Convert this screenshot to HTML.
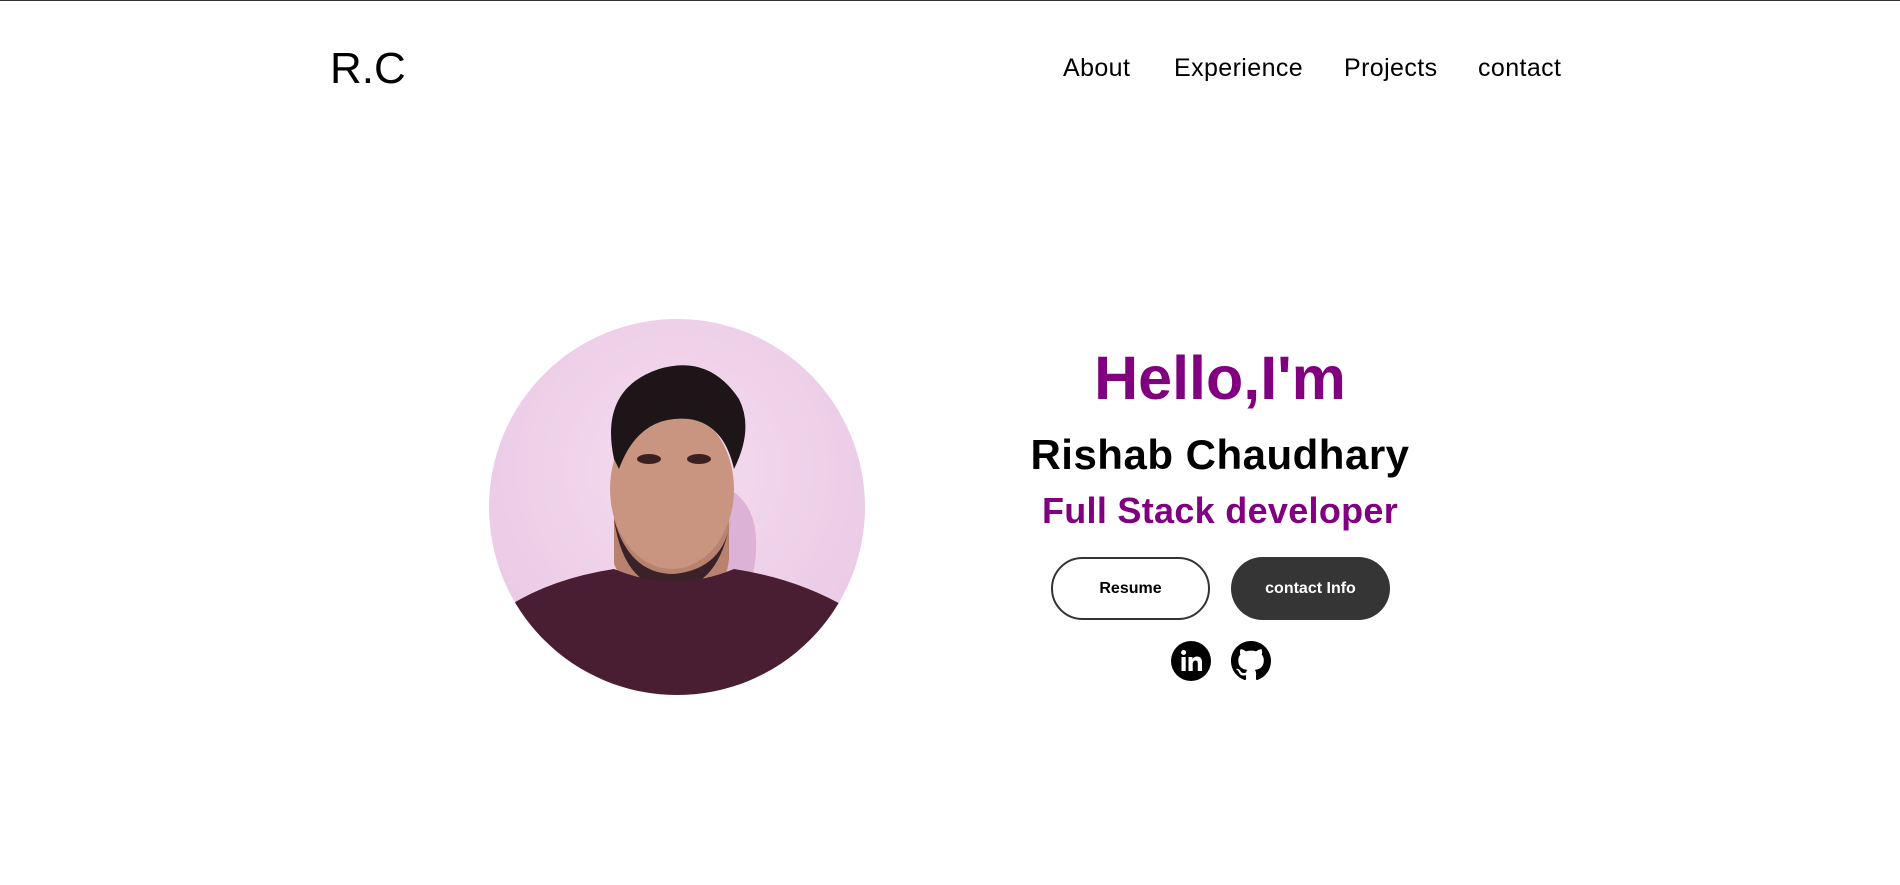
<!DOCTYPE html>
<html><head><meta charset="utf-8"><style>
*{margin:0;padding:0;box-sizing:border-box}
body{width:1900px;height:885px;background:#fff;border-top:1px solid #333;font-family:"Liberation Sans",sans-serif;position:relative;overflow:hidden}
.logo{position:absolute;left:330px;top:43px;font-size:44px;color:#000}
.nav{position:absolute;top:53px;font-size:25px;color:#000;letter-spacing:0.4px}
.t{position:absolute;left:0;width:2440px;text-align:center}
.btn{position:absolute;top:556px;width:159px;height:63px;border-radius:32px;font-weight:bold;font-size:16px;display:flex;align-items:center;justify-content:center}
</style></head><body>
<div class="logo">R.C</div>
<div class="nav" style="left:1063px">About</div>
<div class="nav" style="left:1174px">Experience</div>
<div class="nav" style="left:1344px">Projects</div>
<div class="nav" style="left:1478px">contact</div>

<svg style="position:absolute;left:489px;top:318px" width="376" height="376" viewBox="0 0 376 376">
<defs><clipPath id="c"><circle cx="188" cy="188" r="188"/></clipPath>
<radialGradient id="bg" cx="0.5" cy="0.4" r="0.7"><stop offset="0" stop-color="#f4dcef"/><stop offset="1" stop-color="#e9c6e4"/></radialGradient></defs>
<g clip-path="url(#c)">
<rect width="376" height="376" fill="url(#bg)"/>
<path d="M240 170 Q275 190 265 250 L250 300 L220 260Z" fill="#dcb2d6"/>
<path d="M125 245 Q150 300 190 290 Q235 285 240 240 L240 180 L125 180Z" fill="#b8826f"/>
<ellipse cx="183" cy="170" rx="62" ry="80" fill="#c99580"/>
<path d="M125 140 Q110 70 170 50 Q220 35 250 80 Q265 110 245 150 Q235 105 200 100 Q150 95 130 150Z" fill="#1e1518"/>
<path d="M125 200 Q135 270 185 270 Q230 268 242 200 Q235 250 185 255 Q140 255 125 200Z" fill="#3a2228"/>
<ellipse cx="160" cy="140" rx="12" ry="5" fill="#3a2020"/>
<ellipse cx="210" cy="140" rx="12" ry="5" fill="#3a2020"/>
<path d="M0 376 L15 290 Q60 260 125 250 Q185 275 245 250 Q310 260 360 290 L376 376Z" fill="#4a1e32"/>
</g></svg>

<div class="t" style="top:342px;font-size:61px;font-weight:bold;color:#800080">Hello,I'm</div>
<div class="t" style="top:430px;font-size:42px;font-weight:bold;color:#000;letter-spacing:0.5px">Rishab Chaudhary</div>
<div class="t" style="top:489px;font-size:36px;font-weight:bold;color:#800080;letter-spacing:0.3px">Full Stack developer</div>
<div class="btn" style="left:1051px;border:2px solid #333;color:#000">Resume</div>
<div class="btn" style="left:1231px;background:#353535;color:#fff">contact Info</div>

<svg style="position:absolute;left:1171px;top:640px" width="40" height="40" viewBox="0 0 40 40">
<circle cx="20" cy="20" r="20" fill="#000"/>
<rect x="10.5" y="16" width="4.2" height="14" fill="#fff"/><circle cx="12.6" cy="11.5" r="2.5" fill="#fff"/>
<path d="M17.5 16h4v2q1.5-2.5 4.5-2.5 5 0 5 6V30h-4.2v-7.5q0-3-2.3-3t-2.8 3V30h-4.2Z" fill="#fff"/>
</svg>
<svg style="position:absolute;left:1231px;top:640px" width="40" height="40" viewBox="0 0 16 16">
<path fill="#000" d="M8 0C3.58 0 0 3.58 0 8c0 3.540 2.29 6.530 5.47 7.59.4.07.55-.17.55-.38 0-.19-.01-.82-.01-1.49-2.01.37-2.530-.49-2.690-.94-.09-.23-.48-.94-.82-1.13-.28-.15-.68-.52-.01-.53.63-.01 1.08.58 1.23.82.72 1.21 1.87.87 2.33.66.07-.52.28-.87.51-1.07-1.78-.2-3.64-.89-3.64-3.95 0-.87.31-1.59.82-2.150-.08-.2-.36-1.02.08-2.12 0 0 .67-.21 2.2.82.64-.18 1.32-.27 2-.27.68 0 1.36.09 2 .27 1.53-1.04 2.2-.82 2.2-.82.44 1.1.16 1.92.08 2.12.51.56.82 1.27.82 2.15 0 3.07-1.87 3.75-3.65 3.95.29.25.54.73.54 1.48 0 1.07-.01 1.93-.01 2.2 0 .21.15.46.55.38A8.013 8.013 0 0016 8c0-4.420-3.58-8-8-8z"/>
</svg>
</body></html>
